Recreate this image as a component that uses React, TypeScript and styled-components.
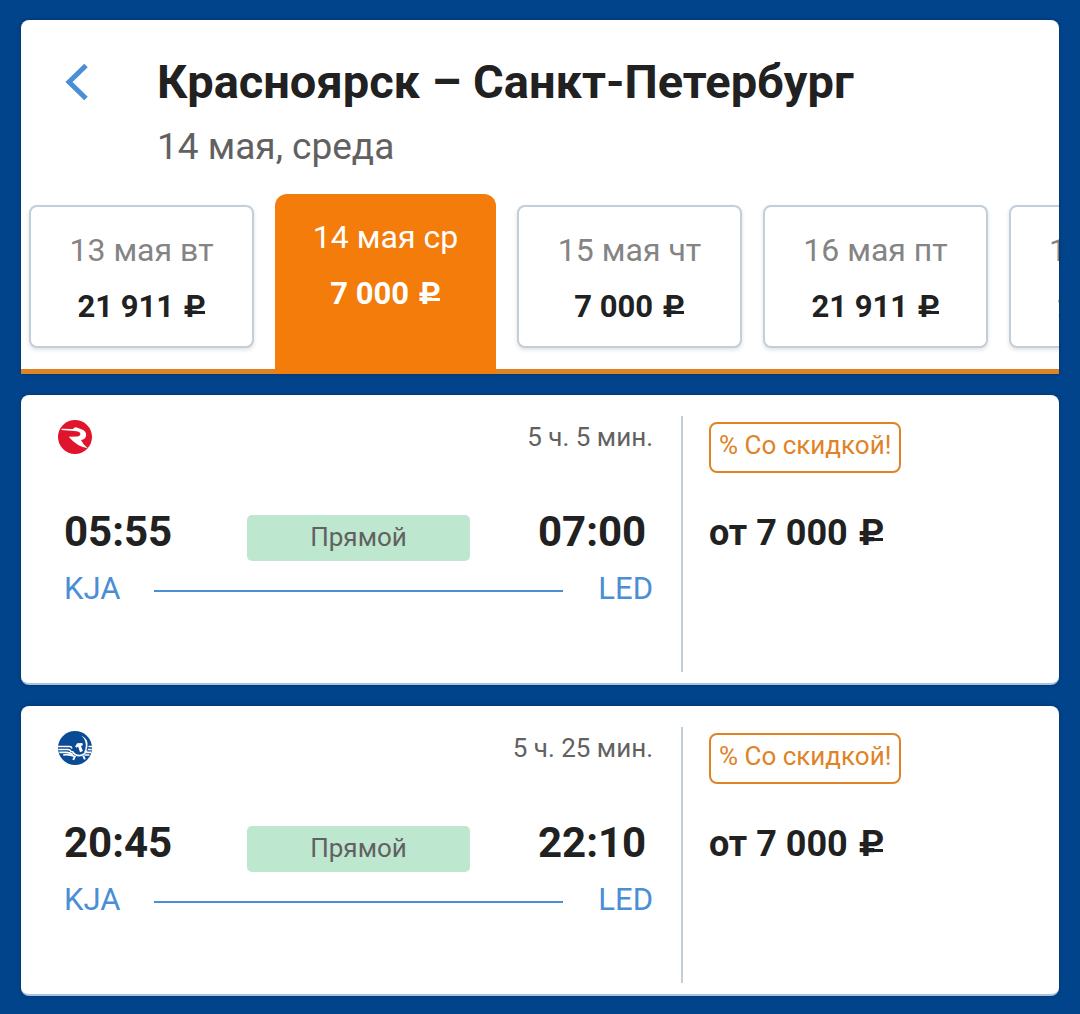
import React from "react";
import styled, { createGlobalStyle } from "styled-components";

const color = {
  page: "#02448b",
  ink: "#212121",
  muted: "#616161",
  faint: "#848484",
  blue: "#4a8ed6",
  line: "#c2cfda",
  orange: "#f37c0b",
  amber: "#df8327",
  mint: "#bee7d0",
};

const GlobalStyle = createGlobalStyle`
  *, *::before, *::after { box-sizing: border-box; }
  body {
    margin: 0;
    background: ${color.page};
    color: ${color.ink};
    font-family: Roboto, "Liberation Sans", sans-serif;
  }
`;

const Page = styled.main`
  display: flex;
  flex-direction: column;
  gap: 21px;
  padding: 20px 21px 18px;
`;

const SearchPanel = styled.section`
  background: #fff;
  border-radius: 8px 8px 0 0;
  box-shadow: 0 0 4px rgba(0, 0, 0, 0.25);
`;

const PanelHeader = styled.header`
  display: flex;
  align-items: flex-start;
  gap: 68px;
  padding: 34px 44px 25px;
`;

const BackButton = styled.button`
  display: flex;
  align-items: center;
  height: 56px;
  padding: 0;
  border: 0;
  background: none;
  color: ${color.blue};
  cursor: pointer;
`;

const RouteTitle = styled.h1`
  margin: 0 0 15px;
  font-size: 47px;
  line-height: 56px;
  font-weight: 700;
`;

const RouteDate = styled.p`
  margin: 0;
  font-size: 37px;
  line-height: 44px;
  color: ${color.muted};
`;

const DateStrip = styled.nav`
  display: flex;
  align-items: flex-end;
  gap: 21px;
  padding-left: 8px;
  overflow: hidden;
  background: linear-gradient(${color.amber}, ${color.amber}) bottom / 100% 5px no-repeat;
`;

const DateTab = styled.button<{ $active: boolean }>`
  flex: none;
  display: flex;
  flex-direction: column;
  align-items: center;
  gap: 21px;
  width: ${(p) => (p.$active ? "221px" : "225px")};
  margin: ${(p) => (p.$active ? "0" : "0 0 26px")};
  padding: ${(p) => (p.$active ? "25px 0 62px" : "25px 0 21px")};
  border: ${(p) => (p.$active ? "0" : `2px solid ${color.line}`)};
  border-radius: ${(p) => (p.$active ? "12px 12px 0 0" : "8px")};
  background: ${(p) => (p.$active ? color.orange : "#fff")};
  box-shadow: ${(p) => (p.$active ? "none" : "0 2px 4px rgba(0, 0, 0, 0.12)")};
  color: ${(p) => (p.$active ? "#fff" : color.ink)};
  font-family: inherit;
  font-size: 31px;
  line-height: 36px;
  white-space: nowrap;
  cursor: pointer;
`;

const DateLabel = styled.span<{ $active: boolean }>`
  font-size: 32px;
  color: ${(p) => (p.$active ? "#fff" : color.faint)};
`;

const DatePrice = styled.span`
  height: 36px;
  font-weight: 700;
`;

/* The sign's lower crossbar is lengthened to the full width of the glyph. */
const Ruble = styled.span<{ $bar: number }>`
  position: relative;
  display: inline-block;
  margin-left: 2px;
  line-height: 1;

  &::after {
    content: "";
    position: absolute;
    left: 1px;
    right: 1px;
    bottom: ${(p) => p.$bar}px;
    height: 3px;
    background: currentColor;
  }
`;

const FlightList = styled.ul`
  display: flex;
  flex-direction: column;
  gap: 21px;
  margin: 0;
  padding: 0;
  list-style: none;
`;

const FlightCard = styled.li`
  display: grid;
  grid-template-columns: 662fr 376fr;
  padding: 21px 0 11px;
  border-bottom: 2px solid #a9c3de;
  border-radius: 8px;
  background: #fff;
  box-shadow: 0 0 4px rgba(0, 0, 0, 0.25);
`;

const Itinerary = styled.div`
  display: flex;
  flex-direction: column;
  min-height: 256px;
  padding: 4px 28px 0 37px;
  border-right: 2px solid ${color.line};
`;

const CarrierRow = styled.div`
  display: flex;
  align-items: center;
  justify-content: space-between;
  margin-bottom: 61px;
`;

const Duration = styled.span`
  font-size: 26px;
  line-height: 34px;
  color: ${color.muted};
`;

const Times = styled.div`
  display: flex;
  gap: 68px;
  padding-left: 6px;
`;

const Time = styled.time`
  flex: none;
  width: 115px;
  font-size: 42px;
  line-height: 34px;
  font-weight: 700;
`;

const StopsBadge = styled.span`
  flex: 1;
  height: 46px;
  border-radius: 5px;
  background: ${color.mint};
  color: ${color.muted};
  font-size: 26px;
  line-height: 44px;
  text-align: center;
`;

const Airports = styled.div`
  display: flex;
  align-items: center;
  gap: 34px;
  margin-top: 10px;
  padding-left: 6px;
`;

const AirportCode = styled.span`
  min-width: 56px;
  font-size: 31px;
  line-height: 36px;
  color: ${color.blue};

  &:last-child {
    text-align: right;
  }
`;

const Leg = styled.span`
  flex: 1;
  height: 2px;
  margin-top: 4px;
  background: ${color.blue};
`;

const Fare = styled.div`
  display: flex;
  flex-direction: column;
  align-items: flex-start;
  gap: 38px;
  padding: 6px 26px 0;
`;

const DiscountTag = styled.span`
  padding: 4px 8px 9px;
  border: 2px solid ${color.amber};
  border-radius: 8px;
  color: ${color.amber};
  font-size: 26px;
  line-height: 34px;
  white-space: nowrap;
`;

const FarePrice = styled.strong`
  font-size: 36px;
  line-height: 44px;
  font-weight: 700;
  white-space: nowrap;
`;

const RossiyaLogo = () => (
  <svg width="34" height="34" viewBox="0 0 105 105" role="img" aria-label="Россия">
    <circle cx="52.5" cy="52.5" r="52.5" fill="#e0142b" />
    <path
      fill="#fff"
      d="M11 27 L46 28 Q52 20 60 24 L70 28 Q87 33 87 46 Q86 59 71 62 Q76 75 92 87 Q60 84 33 52 L61 51 Q70 49 69 42 Q67 35 50 34 L11 31 Z"
    />
  </svg>
);

const AeroflotLogo = () => (
  <svg width="34" height="34" viewBox="0 0 105 105" role="img" aria-label="Аэрофлот">
    <circle cx="52.5" cy="52.5" r="52.5" fill="#0b4a94" />
    <g fill="none" stroke="#fff">
      <path strokeWidth="5" d="M0 48 H36 Q41 48 43 54 M105 48 H94" />
      <path strokeWidth="5" d="M1 57 H32 Q38 58 42 65 M104 57 H92" />
      <path strokeWidth="5" d="M4 66 H28 Q38 67 46 73 M102 66 H87" />
      <path strokeWidth="5" d="M16 74 Q34 71 50 78 M97 74 H82" />
      <path strokeWidth="5" d="M44 62 Q52 76 66 76 Q82 75 89 60" />
      <path strokeWidth="6" d="M53 77 L47 89 M78 76 L83 88" />
    </g>
    <path fill="#fff" d="M72 14 Q94 24 91 47 Q89 62 80 67 Q86 56 86 43 Q85 26 72 14 Z" />
    <path fill="#fff" d="M53 48 L59 38 L75 37 L77 44 L71 46 L77 62 L68 66 L62 48 L57 52 Z" />
  </svg>
);

const dates = [
  { label: "13 мая вт", amount: "21 911" },
  { label: "14 мая ср", amount: "7 000", active: true },
  { label: "15 мая чт", amount: "7 000" },
  { label: "16 мая пт", amount: "21 911" },
  { label: "17 мая сб", amount: "21 911" },
];

const flights = [
  { Logo: RossiyaLogo, duration: "5 ч. 5 мин.", depart: "05:55", arrive: "07:00" },
  { Logo: AeroflotLogo, duration: "5 ч. 25 мин.", depart: "20:45", arrive: "22:10" },
];

export default function App() {
  return (
    <>
      <GlobalStyle />
      <Page>
        <SearchPanel>
          <PanelHeader>
            <BackButton type="button" aria-label="Назад">
              <svg width="24" height="38" viewBox="0 0 24 38" fill="none" aria-hidden="true">
                <path d="M21 2.5 L4 19 L21 35.5" stroke="currentColor" strokeWidth="5" />
              </svg>
            </BackButton>
            <div>
              <RouteTitle>Красноярск – Санкт-Петербург</RouteTitle>
              <RouteDate>14 мая, среда</RouteDate>
            </div>
          </PanelHeader>
          <DateStrip aria-label="Даты вылета">
            {dates.map(({ label, amount, active = false }) => (
              <DateTab key={label} type="button" $active={active} aria-pressed={active}>
                <DateLabel $active={active}>{label}</DateLabel>
                <DatePrice>
                  {amount} <Ruble $bar={8}>₽</Ruble>
                </DatePrice>
              </DateTab>
            ))}
          </DateStrip>
        </SearchPanel>
        <FlightList>
          {flights.map(({ Logo, duration, depart, arrive }) => (
            <FlightCard key={depart}>
              <Itinerary>
                <CarrierRow>
                  <Logo />
                  <Duration>{duration}</Duration>
                </CarrierRow>
                <Times>
                  <Time>{depart}</Time>
                  <StopsBadge>Прямой</StopsBadge>
                  <Time>{arrive}</Time>
                </Times>
                <Airports>
                  <AirportCode>KJA</AirportCode>
                  <Leg />
                  <AirportCode>LED</AirportCode>
                </Airports>
              </Itinerary>
              <Fare>
                <DiscountTag>% Со скидкой!</DiscountTag>
                <FarePrice>
                  от 7 000 <Ruble $bar={10}>₽</Ruble>
                </FarePrice>
              </Fare>
            </FlightCard>
          ))}
        </FlightList>
      </Page>
    </>
  );
}
